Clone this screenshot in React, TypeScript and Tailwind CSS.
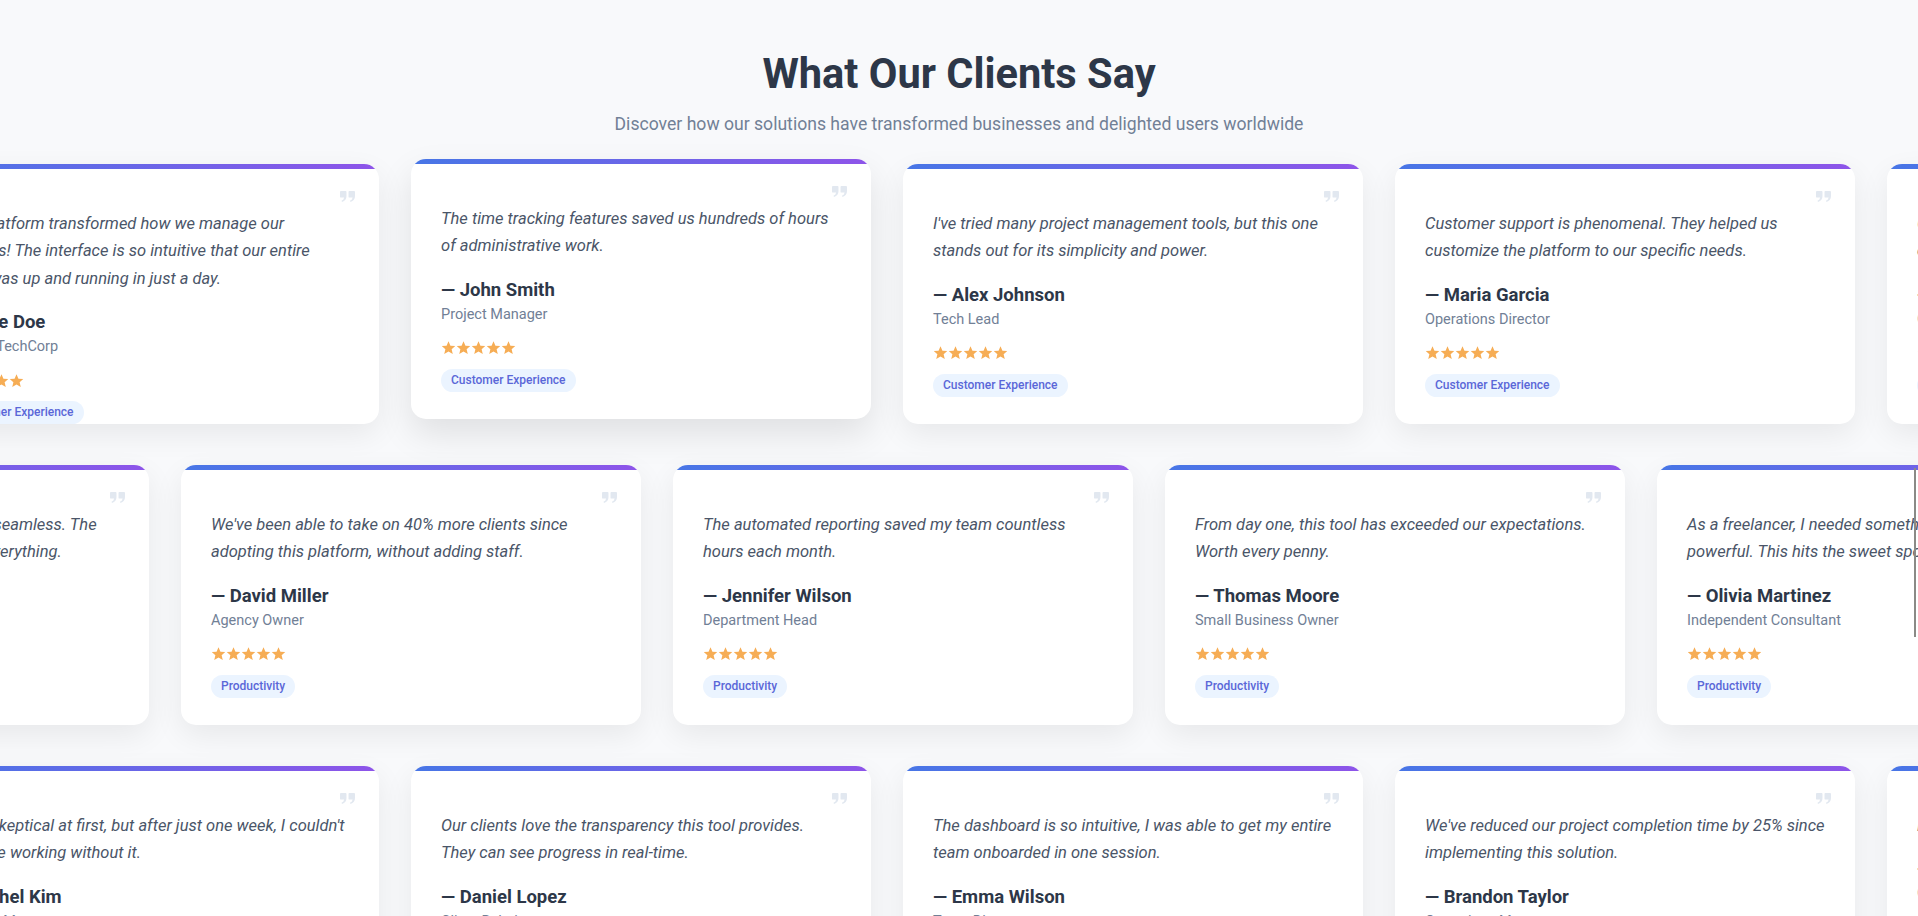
import React from "react"

type Review = {
  text: string
  name: string
  role: string
  tag: string
  hovered?: boolean
}

const rows: { offset: string; items: Review[] }[] = [
  {
    offset: "ml-[-81px]",
    items: [
      {
        text: "This platform transformed how we manage our projects! The interface is so intuitive that our entire team was up and running in just a day.",
        name: "Jane Doe",
        role: "CEO at TechCorp",
        tag: "Customer Experience",
      },
      {
        text: "The time tracking features saved us hundreds of hours of administrative work.",
        name: "John Smith",
        role: "Project Manager",
        tag: "Customer Experience",
        hovered: true,
      },
      {
        text: "I've tried many project management tools, but this one stands out for its simplicity and power.",
        name: "Alex Johnson",
        role: "Tech Lead",
        tag: "Customer Experience",
      },
      {
        text: "Customer support is phenomenal. They helped us customize the platform to our specific needs.",
        name: "Maria Garcia",
        role: "Operations Director",
        tag: "Customer Experience",
      },
      {
        text: "Onboarding was quick and painless for the whole company.",
        name: "Kevin Brown",
        role: "CTO",
        tag: "Customer Experience",
      },
    ],
  },
  {
    offset: "ml-[-311px]",
    items: [
      {
        text: "Integration with our existing tools was seamless. The team adopted it easily and it handles everything.",
        name: "Sarah Chen",
        role: "Product Owner",
        tag: "Productivity",
      },
      {
        text: "We've been able to take on 40% more clients since adopting this platform, without adding staff.",
        name: "David Miller",
        role: "Agency Owner",
        tag: "Productivity",
      },
      {
        text: "The automated reporting saved my team countless hours each month.",
        name: "Jennifer Wilson",
        role: "Department Head",
        tag: "Productivity",
      },
      {
        text: "From day one, this tool has exceeded our expectations. Worth every penny.",
        name: "Thomas Moore",
        role: "Small Business Owner",
        tag: "Productivity",
      },
      {
        text: "As a freelancer, I needed something affordable but powerful. This hits the sweet spot.",
        name: "Olivia Martinez",
        role: "Independent Consultant",
        tag: "Productivity",
      },
    ],
  },
  {
    offset: "ml-[-81px]",
    items: [
      {
        text: "I was skeptical at first, but after just one week, I couldn't imagine working without it.",
        name: "Rachel Kim",
        role: "Product Manager",
        tag: "Efficiency",
      },
      {
        text: "Our clients love the transparency this tool provides. They can see progress in real-time.",
        name: "Daniel Lopez",
        role: "Client Relations",
        tag: "Efficiency",
      },
      {
        text: "The dashboard is so intuitive, I was able to get my entire team onboarded in one session.",
        name: "Emma Wilson",
        role: "Team Director",
        tag: "Efficiency",
      },
      {
        text: "We've reduced our project completion time by 25% since implementing this solution.",
        name: "Brandon Taylor",
        role: "Operations Manager",
        tag: "Efficiency",
      },
      {
        text: "Everything we need in one place, finally.",
        name: "Lisa Park",
        role: "COO",
        tag: "Efficiency",
      },
    ],
  },
]

function QuoteMark() {
  return (
    <svg className="absolute right-[24px] top-[27px] h-[11px] w-[15px]" viewBox="0 0 15 11" fill="#e2e8f0">
      <path d="M0 0.9Q0 0 0.9 0H5.6Q6.5 0 6.5 0.9V5Q6.5 9.6 2 11L1.5 9.8Q4 8.8 4.1 6.6H0.9Q0 6.6 0 5.7Z" />
      <path d="M8.5 0.9Q8.5 0 9.4 0H14.1Q15 0 15 0.9V5Q15 9.6 10.5 11L10 9.8Q12.5 8.8 12.6 6.6H9.4Q8.5 6.6 8.5 5.7Z" />
    </svg>
  )
}

function Stars() {
  return (
    <div className="mt-[10px] flex h-[24px] items-center">
      {[0, 1, 2, 3, 4].map((i) => (
        <svg key={i} className="h-[15.5px] w-[15px]" viewBox="0 0 24 24" fill="#f6ad55">
          <polygon points="12,1.5 15.1,8.6 22.8,9.2 17,14.3 18.8,21.9 12,17.8 5.2,21.9 7,14.3 1.2,9.2 8.9,8.6" />
        </svg>
      ))}
    </div>
  )
}

function Card({ r }: { r: Review }) {
  return (
    <div
      className={`relative h-[260px] w-[460px] shrink-0 overflow-hidden rounded-[15px] bg-white px-[30px] pt-[45.5px] ${
        r.hovered
          ? "-translate-y-[5px] shadow-[0_15px_35px_rgba(0,0,0,0.1)]"
          : "shadow-[0_10px_30px_rgba(0,0,0,0.07)]"
      }`}
    >
      <div className="absolute inset-x-0 top-0 h-[5px] bg-[linear-gradient(90deg,#4776e6,#8e54e9)]" />
      <QuoteMark />
      <p className="text-[16.5px] italic leading-[27.5px] text-[#4a5568]">{r.text}</p>
      <p className="mt-[16px] text-[18.5px] font-bold leading-[28px] text-[#2d3748]">— {r.name}</p>
      <p className="text-[14.5px] leading-[22px] text-[#718096]">{r.role}</p>
      <Stars />
      <span className="mt-[9px] inline-block rounded-full bg-[#ebf4ff] px-[10px] text-[12px] font-medium leading-[23px] text-[#5a67d8]">
        {r.tag}
      </span>
    </div>
  )
}

export default function App() {
  return (
    <div className="relative h-[916px] w-full overflow-hidden bg-[#f8f9fb] font-['Roboto',sans-serif]">
      <div className="pt-[49px] text-center">
        <h2 className="text-[41.6px] font-bold leading-[1.2] text-[#2d3748]">What Our Clients Say</h2>
        <p className="mt-[12px] text-[17.6px] leading-[1.5] text-[#718096]">
          Discover how our solutions have transformed businesses and delighted users worldwide
        </p>
      </div>

      <div className="mt-[27px] flex flex-col gap-[41px]">
        {rows.map((row, i) => (
          <div key={i} className={`flex gap-[32px] ${row.offset}`}>
            {row.items.map((r, j) => (
              <Card key={j} r={r} />
            ))}
          </div>
        ))}
      </div>

      {/* scrollbar remnant on the right edge */}
      <div className="absolute left-[1914px] top-[468px] h-[169px] w-[2px] bg-[#8a8a86]" />
    </div>
  )
}
